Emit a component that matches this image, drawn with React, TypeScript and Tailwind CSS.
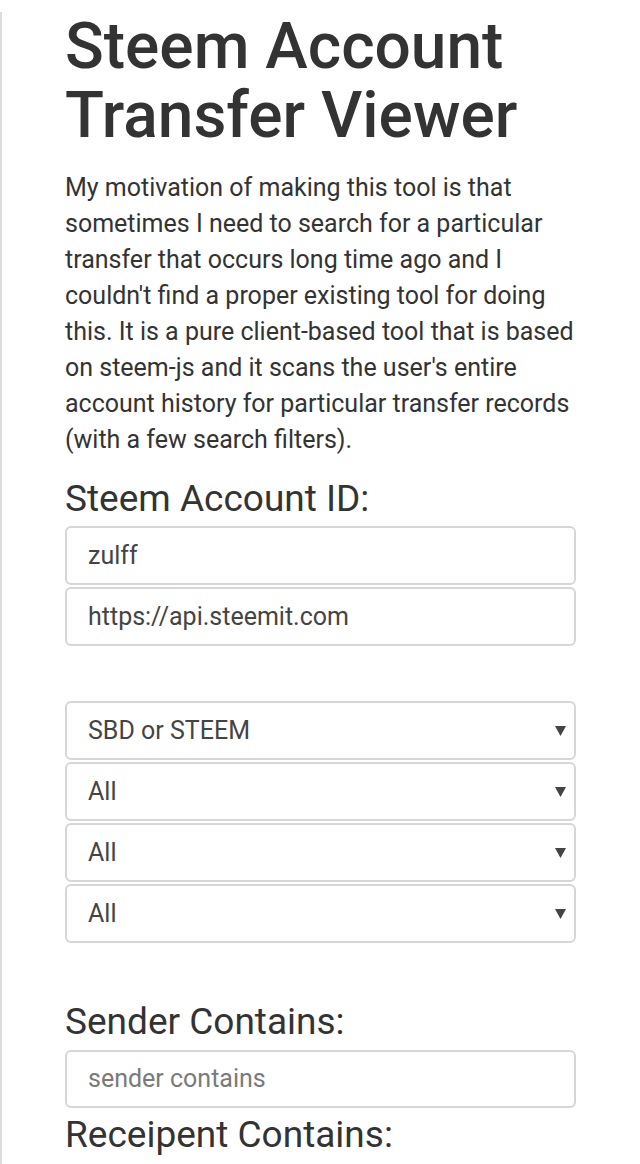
import React from "react";

const FONT = "font-['Roboto','Liberation_Sans',sans-serif]";

const Field: React.FC<{ value: string; placeholder?: boolean; select?: boolean; h?: string }> = ({
  value,
  placeholder,
  select,
  h = "h-[59px]",
}) => (
  <div
    className={`${h} flex items-center justify-between rounded-[6px] border-2 border-[#d6d6d6] bg-white pl-[21px] pr-[8px] text-[25px] ${
      placeholder ? "text-[#7a7a7a]" : "text-[#444]"
    }`}
  >
    <span>{value}</span>
    {select && (
      <svg width="11" height="10" viewBox="0 0 11 10">
        <path d="M0 0 H11 L5.5 10 Z" fill="#444" />
      </svg>
    )}
  </div>
);

export default function App() {
  return (
    <div className={`${FONT} min-h-[1164px] bg-white`}>
      <div className="min-h-[1164px] border-l-2 border-[#dcdcdc] pl-[63px]">
        <div className="w-[511px] text-[#333]">
          <h1 className="mt-[12px] mb-[20px] text-[64px] leading-[69px] font-medium">
            Steem Account Transfer Viewer
          </h1>
          <p className="text-[25px] leading-[36px]">
            My motivation of making this tool is that sometimes I need to search for a particular
            transfer that occurs long time ago and I couldn't find a proper existing tool for doing
            this. It is a pure client-based tool that is based on steem-js and it scans the user's
            entire account history for particular transfer records (with a few search filters).
          </p>

          <div className="mt-[19px] mb-[6px] text-[37px] leading-[43px]">Steem Account ID:</div>
          <div className="flex flex-col gap-[2px]">
            <Field value="zulff" />
            <Field value="https://api.steemit.com" />
          </div>

          <div className="mt-[55px] flex flex-col gap-[2px]">
            <Field value="SBD or STEEM" select />
            <Field value="All" select />
            <Field value="All" select />
            <Field value="All" select />
          </div>

          <div className="mt-[57px] mb-[7px] text-[37px] leading-[43px]">Sender Contains:</div>
          <Field value="sender contains" placeholder h="h-[58px]" />
          <div className="mt-[5px] text-[37px] leading-[43px]">Receipent Contains:</div>
        </div>
      </div>
    </div>
  );
}
